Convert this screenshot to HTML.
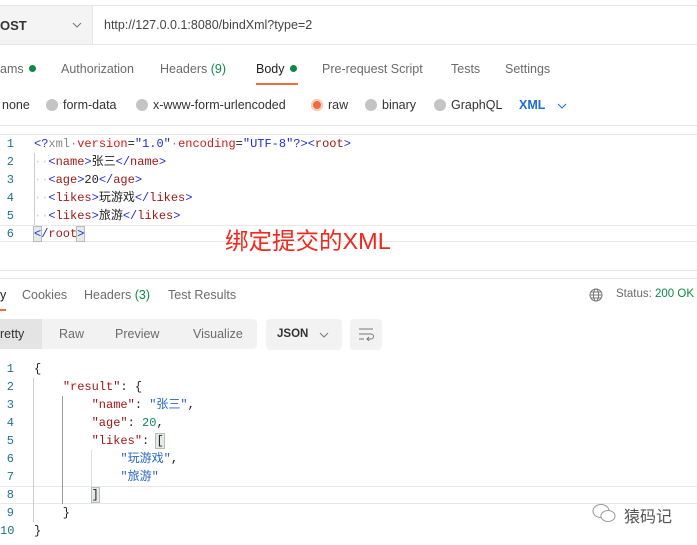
<!DOCTYPE html>
<html><head><meta charset="utf-8"><style>
*{margin:0;padding:0;box-sizing:border-box}
body{width:697px;height:545px;background:#fff;position:relative;overflow:hidden;font-family:"Liberation Sans","Noto Sans CJK SC",sans-serif;font-size:12.5px;color:#6b6b6b}
.a{position:absolute;white-space:nowrap}
.hl{position:absolute;left:0;width:697px;height:1px;background:#e6e6e6}
.ln{position:absolute;width:14px;text-align:right;color:#1d7390;font-family:"Liberation Mono",monospace;font-size:12px;line-height:14px;height:14px}
.code{position:absolute;left:34px;white-space:pre;font-family:"Liberation Mono","Noto Sans CJK SC",monospace;font-size:12px;color:#222;line-height:14px;height:14px}
.b{color:#1f2ed8}.r{color:#a01818}.g{color:#888}.rs{color:#d31818}.s{color:#1f2ed8}
.k{color:#a31515}.v{color:#2766c8}.n{color:#108a5a}
.dot{display:inline-block;width:7px;height:7px;border-radius:50%;background:#0c8a45;margin-left:5px;vertical-align:1px}
.rad{display:inline-block;width:12px;height:12px;border-radius:50%;background:#c4c4c4;vertical-align:-2px;margin-right:5px}
</style></head><body>
<div class="hl" style="top:5px"></div>
<div class="a" style="left:0;top:6px;width:92px;height:38px;background:#f4f4f4"></div>
<div class="a" style="left:0;top:18px;font-weight:bold;color:#333;font-size:13px">OST</div>
<svg class="a" style="left:72px;top:22px" width="10" height="6"><path d="M1 1l4 4 4-4" stroke="#777" fill="none"/></svg>
<div class="a" style="left:92px;top:6px;width:1px;height:38px;background:#e6e6e6"></div>
<div class="a" style="left:104px;top:18px;color:#444;font-size:12.5px">http://127.0.0.1:8080/bindXml?type=2</div>
<div class="hl" style="top:44px"></div>

<div class="a" style="left:0;top:62px">ams<span class="dot"></span></div>
<div class="a" style="left:61px;top:62px">Authorization</div>
<div class="a" style="left:160px;top:62px">Headers <span style="color:#0c8a45">(9)</span></div>
<div class="a" style="left:256px;top:62px;color:#222">Body<span class="dot"></span></div>
<div class="a" style="left:256px;top:83px;width:42px;height:2px;background:#f26b3a"></div>
<div class="a" style="left:322px;top:62px">Pre-request Script</div>
<div class="a" style="left:451px;top:62px">Tests</div>
<div class="a" style="left:505px;top:62px">Settings</div>

<div class="a" style="left:2px;top:98px;color:#333">none</div>
<div class="a" style="left:46px;top:98px;color:#333"><span class="rad"></span>form-data</div>
<div class="a" style="left:136px;top:98px;color:#333"><span class="rad"></span>x-www-form-urlencoded</div>
<div class="a" style="left:311px;top:98px;color:#333"><span class="rad" style="background:#f26b3a;box-shadow:0 0 0 2px #f3d0c4 inset"></span>raw</div>
<div class="a" style="left:365px;top:98px;color:#333"><span class="rad"></span>binary</div>
<div class="a" style="left:434px;top:98px;color:#333"><span class="rad"></span>GraphQL</div>
<div class="a" style="left:519px;top:98px;color:#1b6fd1;font-weight:bold">XML</div>
<svg class="a" style="left:557px;top:103px" width="10" height="6"><path d="M1 1l4 4 4-4" stroke="#1b6fd1" fill="none"/></svg>
<div class="hl" style="top:125px"></div>
<div class="hl" style="top:134px"></div>

<div class="ln" style="left:0;top:137px">1</div>
<div class="ln" style="left:0;top:155px">2</div>
<div class="ln" style="left:0;top:173px">3</div>
<div class="ln" style="left:0;top:191px">4</div>
<div class="ln" style="left:0;top:209px">5</div>
<div class="ln" style="left:0;top:227px">6</div>
<div class="a" style="left:34px;top:153px;width:1px;height:72px;background:#ccc"></div>
<div class="hl" style="top:225px;background:#e8e8e8"></div>
<div class="hl" style="top:241px;background:#e8e8e8"></div>
<div class="code" style="top:137px"><span class="b">&lt;?</span><span class="g">xml</span><span class="g">·</span><span class="rs">version</span>=<span class="s">"1.0"</span><span class="g">·</span><span class="rs">encoding</span>=<span class="s">"UTF-8"</span><span class="b">?&gt;&lt;</span><span class="r">root</span><span class="b">&gt;</span></div>
<div class="code" style="top:155px"><span style="color:#ccc">··</span><span class="b">&lt;</span><span class="r">name</span><span class="b">&gt;</span>张三<span class="b">&lt;/</span><span class="r">name</span><span class="b">&gt;</span></div>
<div class="code" style="top:173px"><span style="color:#ccc">··</span><span class="b">&lt;</span><span class="r">age</span><span class="b">&gt;</span>20<span class="b">&lt;/</span><span class="r">age</span><span class="b">&gt;</span></div>
<div class="code" style="top:191px"><span style="color:#ccc">··</span><span class="b">&lt;</span><span class="r">likes</span><span class="b">&gt;</span>玩游戏<span class="b">&lt;/</span><span class="r">likes</span><span class="b">&gt;</span></div>
<div class="code" style="top:209px"><span style="color:#ccc">··</span><span class="b">&lt;</span><span class="r">likes</span><span class="b">&gt;</span>旅游<span class="b">&lt;/</span><span class="r">likes</span><span class="b">&gt;</span></div>
<div class="code" style="top:227px"><span class="b" style="background:#e4ebe4;outline:1px solid #bbb">&lt;</span><span class="b">/</span><span class="r">root</span><span class="b" style="background:#e4ebe4;outline:1px solid #bbb">&gt;</span></div>
<div class="a" style="left:225px;top:222px;color:#f0281e;font-size:23.5px">绑定提交的XML</div>

<div class="hl" style="top:270px"></div>
<div class="hl" style="top:278px"></div>
<div class="a" style="left:0;top:288px;color:#222">y</div>
<div class="a" style="left:0;top:309px;width:6px;height:2px;background:#f26b3a"></div>
<div class="a" style="left:22px;top:288px">Cookies</div>
<div class="a" style="left:84px;top:288px">Headers <span style="color:#0c8a45">(3)</span></div>
<div class="a" style="left:168px;top:288px">Test Results</div>
<svg class="a" style="left:589px;top:288px" width="14" height="14" viewBox="0 0 14 14" fill="none" stroke="#777" stroke-width="1"><circle cx="7" cy="7" r="6"/><ellipse cx="7" cy="7" rx="2.6" ry="6"/><path d="M1 7h12M2 4h10M2 10h10"/></svg>
<div class="a" style="left:616px;top:288px;font-size:11.5px">Status: <span style="color:#0c8a45">200 OK</span></div>

<div class="a" style="left:0;top:319px;width:257px;height:30px;background:#f2f2f2;border-radius:0 4px 4px 0"></div>
<div class="a" style="left:0;top:319px;width:42px;height:30px;background:#e4e4e4"></div>
<div class="a" style="left:0;top:327px;color:#333">retty</div>
<div class="a" style="left:59px;top:327px">Raw</div>
<div class="a" style="left:115px;top:327px">Preview</div>
<div class="a" style="left:193px;top:327px">Visualize</div>
<div class="a" style="left:266px;top:319px;width:76px;height:31px;background:#f2f2f2;border-radius:4px"></div>
<div class="a" style="left:277px;top:328px;color:#333;font-weight:bold;font-size:11.5px">JSON</div>
<svg class="a" style="left:319px;top:332px" width="10" height="6"><path d="M1 1l4 4 4-4" stroke="#777" fill="none"/></svg>
<div class="a" style="left:350px;top:319px;width:32px;height:31px;background:#f2f2f2;border-radius:4px"></div>
<svg class="a" style="left:358px;top:327px" width="16" height="14" fill="none" stroke="#777" stroke-width="1"><path d="M1 2h14M1 7h12a2.5 2.5 0 0 1 0 5H9M11 10l-2 2 2 2M1 12h5"/></svg>

<div class="hl" style="top:486px;background:#e8e8e8"></div>
<div class="hl" style="top:503px;background:#e8e8e8"></div>
<div class="ln" style="left:0;top:362px">1</div>
<div class="ln" style="left:0;top:380px">2</div>
<div class="ln" style="left:0;top:398px">3</div>
<div class="ln" style="left:0;top:416px">4</div>
<div class="ln" style="left:0;top:434px">5</div>
<div class="ln" style="left:0;top:452px">6</div>
<div class="ln" style="left:0;top:470px">7</div>
<div class="ln" style="left:0;top:488px">8</div>
<div class="ln" style="left:0;top:506px">9</div>
<div class="ln" style="left:0;top:524px;width:14px">10</div>
<div class="a" style="left:33px;top:378px;width:1px;height:144px;background:#ccc"></div>
<div class="a" style="left:62px;top:396px;width:1px;height:108px;background:#999"></div>
<div class="a" style="left:91px;top:450px;width:1px;height:54px;background:#ddd"></div>
<div class="code" style="top:362px">{</div>
<div class="code" style="top:380px">    <span class="k">"result"</span>: {</div>
<div class="code" style="top:398px">        <span class="k">"name"</span>: <span class="v">"张三"</span>,</div>
<div class="code" style="top:416px">        <span class="k">"age"</span>: <span class="n">20</span>,</div>
<div class="code" style="top:434px">        <span class="k">"likes"</span>: <span style="background:#e4ebe4;outline:1px solid #bbb">[</span></div>
<div class="code" style="top:452px">            <span class="v">"玩游戏"</span>,</div>
<div class="code" style="top:470px">            <span class="v">"旅游"</span></div>
<div class="code" style="top:488px">        <span style="background:#e4ebe4;outline:1px solid #bbb">]</span></div>
<div class="code" style="top:506px">    }</div>
<div class="code" style="top:524px">}</div>

<svg class="a" style="left:591px;top:503px" width="26" height="20" fill="none" stroke="#999" stroke-width="1"><ellipse cx="10" cy="8" rx="8" ry="6.5"/><ellipse cx="17" cy="13" rx="7" ry="5.5" fill="#fff"/></svg>
<div class="a" style="left:624px;top:503px;color:#555;font-size:16px">猿码记</div>
</body></html>
